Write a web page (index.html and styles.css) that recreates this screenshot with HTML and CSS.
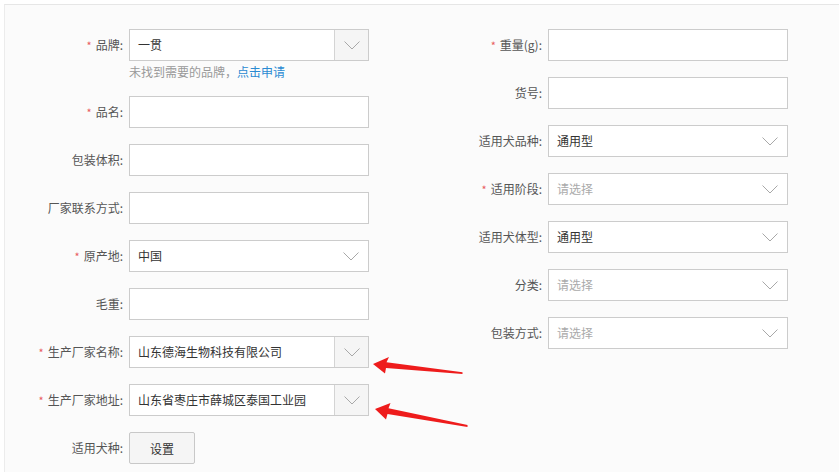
FILE: index.html
```html
<!DOCTYPE html>
<html lang="zh">
<head>
<meta charset="utf-8">
<link rel="stylesheet" href="styles.css">
</head>
<body>
<div class="page">
  <div class="form">
    <div class="col">
      <div class="row top">
        <label class="lbl"><span class="req">*</span>品牌:</label>
        <div class="field-wrap">
          <div class="select btn-select"><span class="val">一贯</span><span class="arrow-btn"><svg width="16" height="9" viewBox="0 0 16 9"><polyline points="0.5,0.5 8,8 15.5,0.5" fill="none" stroke="#a8a8a8" stroke-width="1"/></svg></span></div>
          <div class="hint">未找到需要的品牌，<a class="link">点击申请</a></div>
        </div>
      </div>
      <div class="row"><label class="lbl"><span class="req">*</span>品名:</label><div class="input"></div></div>
      <div class="row"><label class="lbl">包装体积:</label><div class="input"></div></div>
      <div class="row"><label class="lbl">厂家联系方式:</label><div class="input"></div></div>
      <div class="row"><label class="lbl"><span class="req">*</span>原产地:</label><div class="select"><span class="val">中国</span><svg class="chev" width="16" height="9" viewBox="0 0 16 9"><polyline points="0.5,0.5 8,8 15.5,0.5" fill="none" stroke="#a8a8a8" stroke-width="1"/></svg></div></div>
      <div class="row"><label class="lbl">毛重:</label><div class="input"></div></div>
      <div class="row"><label class="lbl"><span class="req">*</span>生产厂家名称:</label><div class="select btn-select"><span class="val">山东德海生物科技有限公司</span><span class="arrow-btn"><svg width="16" height="9" viewBox="0 0 16 9"><polyline points="0.5,0.5 8,8 15.5,0.5" fill="none" stroke="#a8a8a8" stroke-width="1"/></svg></span></div></div>
      <div class="row"><label class="lbl"><span class="req">*</span>生产厂家地址:</label><div class="select btn-select"><span class="val">山东省枣庄市薛城区泰国工业园</span><span class="arrow-btn"><svg width="16" height="9" viewBox="0 0 16 9"><polyline points="0.5,0.5 8,8 15.5,0.5" fill="none" stroke="#a8a8a8" stroke-width="1"/></svg></span></div></div>
      <div class="row"><label class="lbl">适用犬种:</label><button class="btn">设置</button></div>
    </div>
    <div class="col">
      <div class="row"><label class="lbl"><span class="req">*</span>重量(g):</label><div class="input"></div></div>
      <div class="row"><label class="lbl">货号:</label><div class="input"></div></div>
      <div class="row"><label class="lbl">适用犬品种:</label><div class="select"><span class="val">通用型</span><svg class="chev" width="16" height="9" viewBox="0 0 16 9"><polyline points="0.5,0.5 8,8 15.5,0.5" fill="none" stroke="#a8a8a8" stroke-width="1"/></svg></div></div>
      <div class="row"><label class="lbl"><span class="req">*</span>适用阶段:</label><div class="select"><span class="val ph">请选择</span><svg class="chev" width="16" height="9" viewBox="0 0 16 9"><polyline points="0.5,0.5 8,8 15.5,0.5" fill="none" stroke="#a8a8a8" stroke-width="1"/></svg></div></div>
      <div class="row"><label class="lbl">适用犬体型:</label><div class="select"><span class="val">通用型</span><svg class="chev" width="16" height="9" viewBox="0 0 16 9"><polyline points="0.5,0.5 8,8 15.5,0.5" fill="none" stroke="#a8a8a8" stroke-width="1"/></svg></div></div>
      <div class="row"><label class="lbl">分类:</label><div class="select"><span class="val ph">请选择</span><svg class="chev" width="16" height="9" viewBox="0 0 16 9"><polyline points="0.5,0.5 8,8 15.5,0.5" fill="none" stroke="#a8a8a8" stroke-width="1"/></svg></div></div>
      <div class="row"><label class="lbl">包装方式:</label><div class="select"><span class="val ph">请选择</span><svg class="chev" width="16" height="9" viewBox="0 0 16 9"><polyline points="0.5,0.5 8,8 15.5,0.5" fill="none" stroke="#a8a8a8" stroke-width="1"/></svg></div></div>
    </div>
  </div>
  <svg class="annot" width="839" height="472" viewBox="0 0 839 472">
    <polygon points="373,364 389,357 386.5,362.3 462.5,372.3 462.5,374 386,368 385,373.5" fill="#ee1c1c"/>
    <polygon points="375,409 390.5,403 388.5,408.3 467.5,425 467.5,427 387.5,414 386,419.5" fill="#ee1c1c"/>
  </svg>
</div>
</body>
</html>
```

FILE: styles.css
```css
* { box-sizing: border-box; }
html, body {
  margin: 0;
  padding: 0;
  background: #ffffff;
  overflow: hidden;
  height: 472px;
}
body {
  font-family: "Noto Sans CJK SC", "Liberation Sans", sans-serif;
  font-size: 12px;
  color: #333;
}
.page {
  position: relative;
  width: 839px;
  height: 472px;
  padding-top: 4px;
}
.form {
  display: grid;
  grid-template-columns: 419px 419px;
  margin-left: 4px;
  padding-top: 24px;
  border-top: 1px solid #e6e6e6;
  border-left: 1px solid #ececec;
  background: #fbfbfb;
  height: 470px;
}
.row {
  display: flex;
  align-items: center;
  margin-bottom: 16px;
  height: 32px;
}
.row.top {
  align-items: flex-start;
  height: auto;
}
.lbl {
  width: 124px;
  flex: none;
  text-align: right;
  padding-right: 6px;
  line-height: 32px;
  color: #555;
  white-space: nowrap;
}
.req {
  color: #e85d5d;
  margin-right: 4px;
  font-size: 11px;
}
.input, .select {
  width: 240px;
  height: 32px;
  border: 1px solid #cccccc;
  background: #fff;
  flex: none;
}
.select {
  display: flex;
  align-items: center;
  justify-content: space-between;
  padding-left: 8px;
}
.val {
  color: #333;
  line-height: 30px;
}
.val.ph { color: #aaa; }
.chev {
  margin-right: 9px;
  margin-top: 1px;
}
.btn-select { padding-right: 0; }
.arrow-btn {
  width: 34px;
  height: 30px;
  border-left: 1px solid #d4d4d4;
  background: #f5f5f5;
  display: flex;
  align-items: center;
  justify-content: center;
  flex: none;
}
.field-wrap { display: flex; flex-direction: column; }
.hint {
  margin-top: 3px;
  line-height: 16px;
  color: #999;
}
.link { color: #2a8ad2; }
.btn {
  width: 66px;
  height: 32px;
  border: 1px solid #c8c8c8;
  border-radius: 2px;
  background: #f5f5f5;
  font-family: inherit;
  font-size: 12px;
  color: #333;
  padding: 0;
}
.annot {
  position: absolute;
  left: 0;
  top: 0;
  pointer-events: none;
}
```
